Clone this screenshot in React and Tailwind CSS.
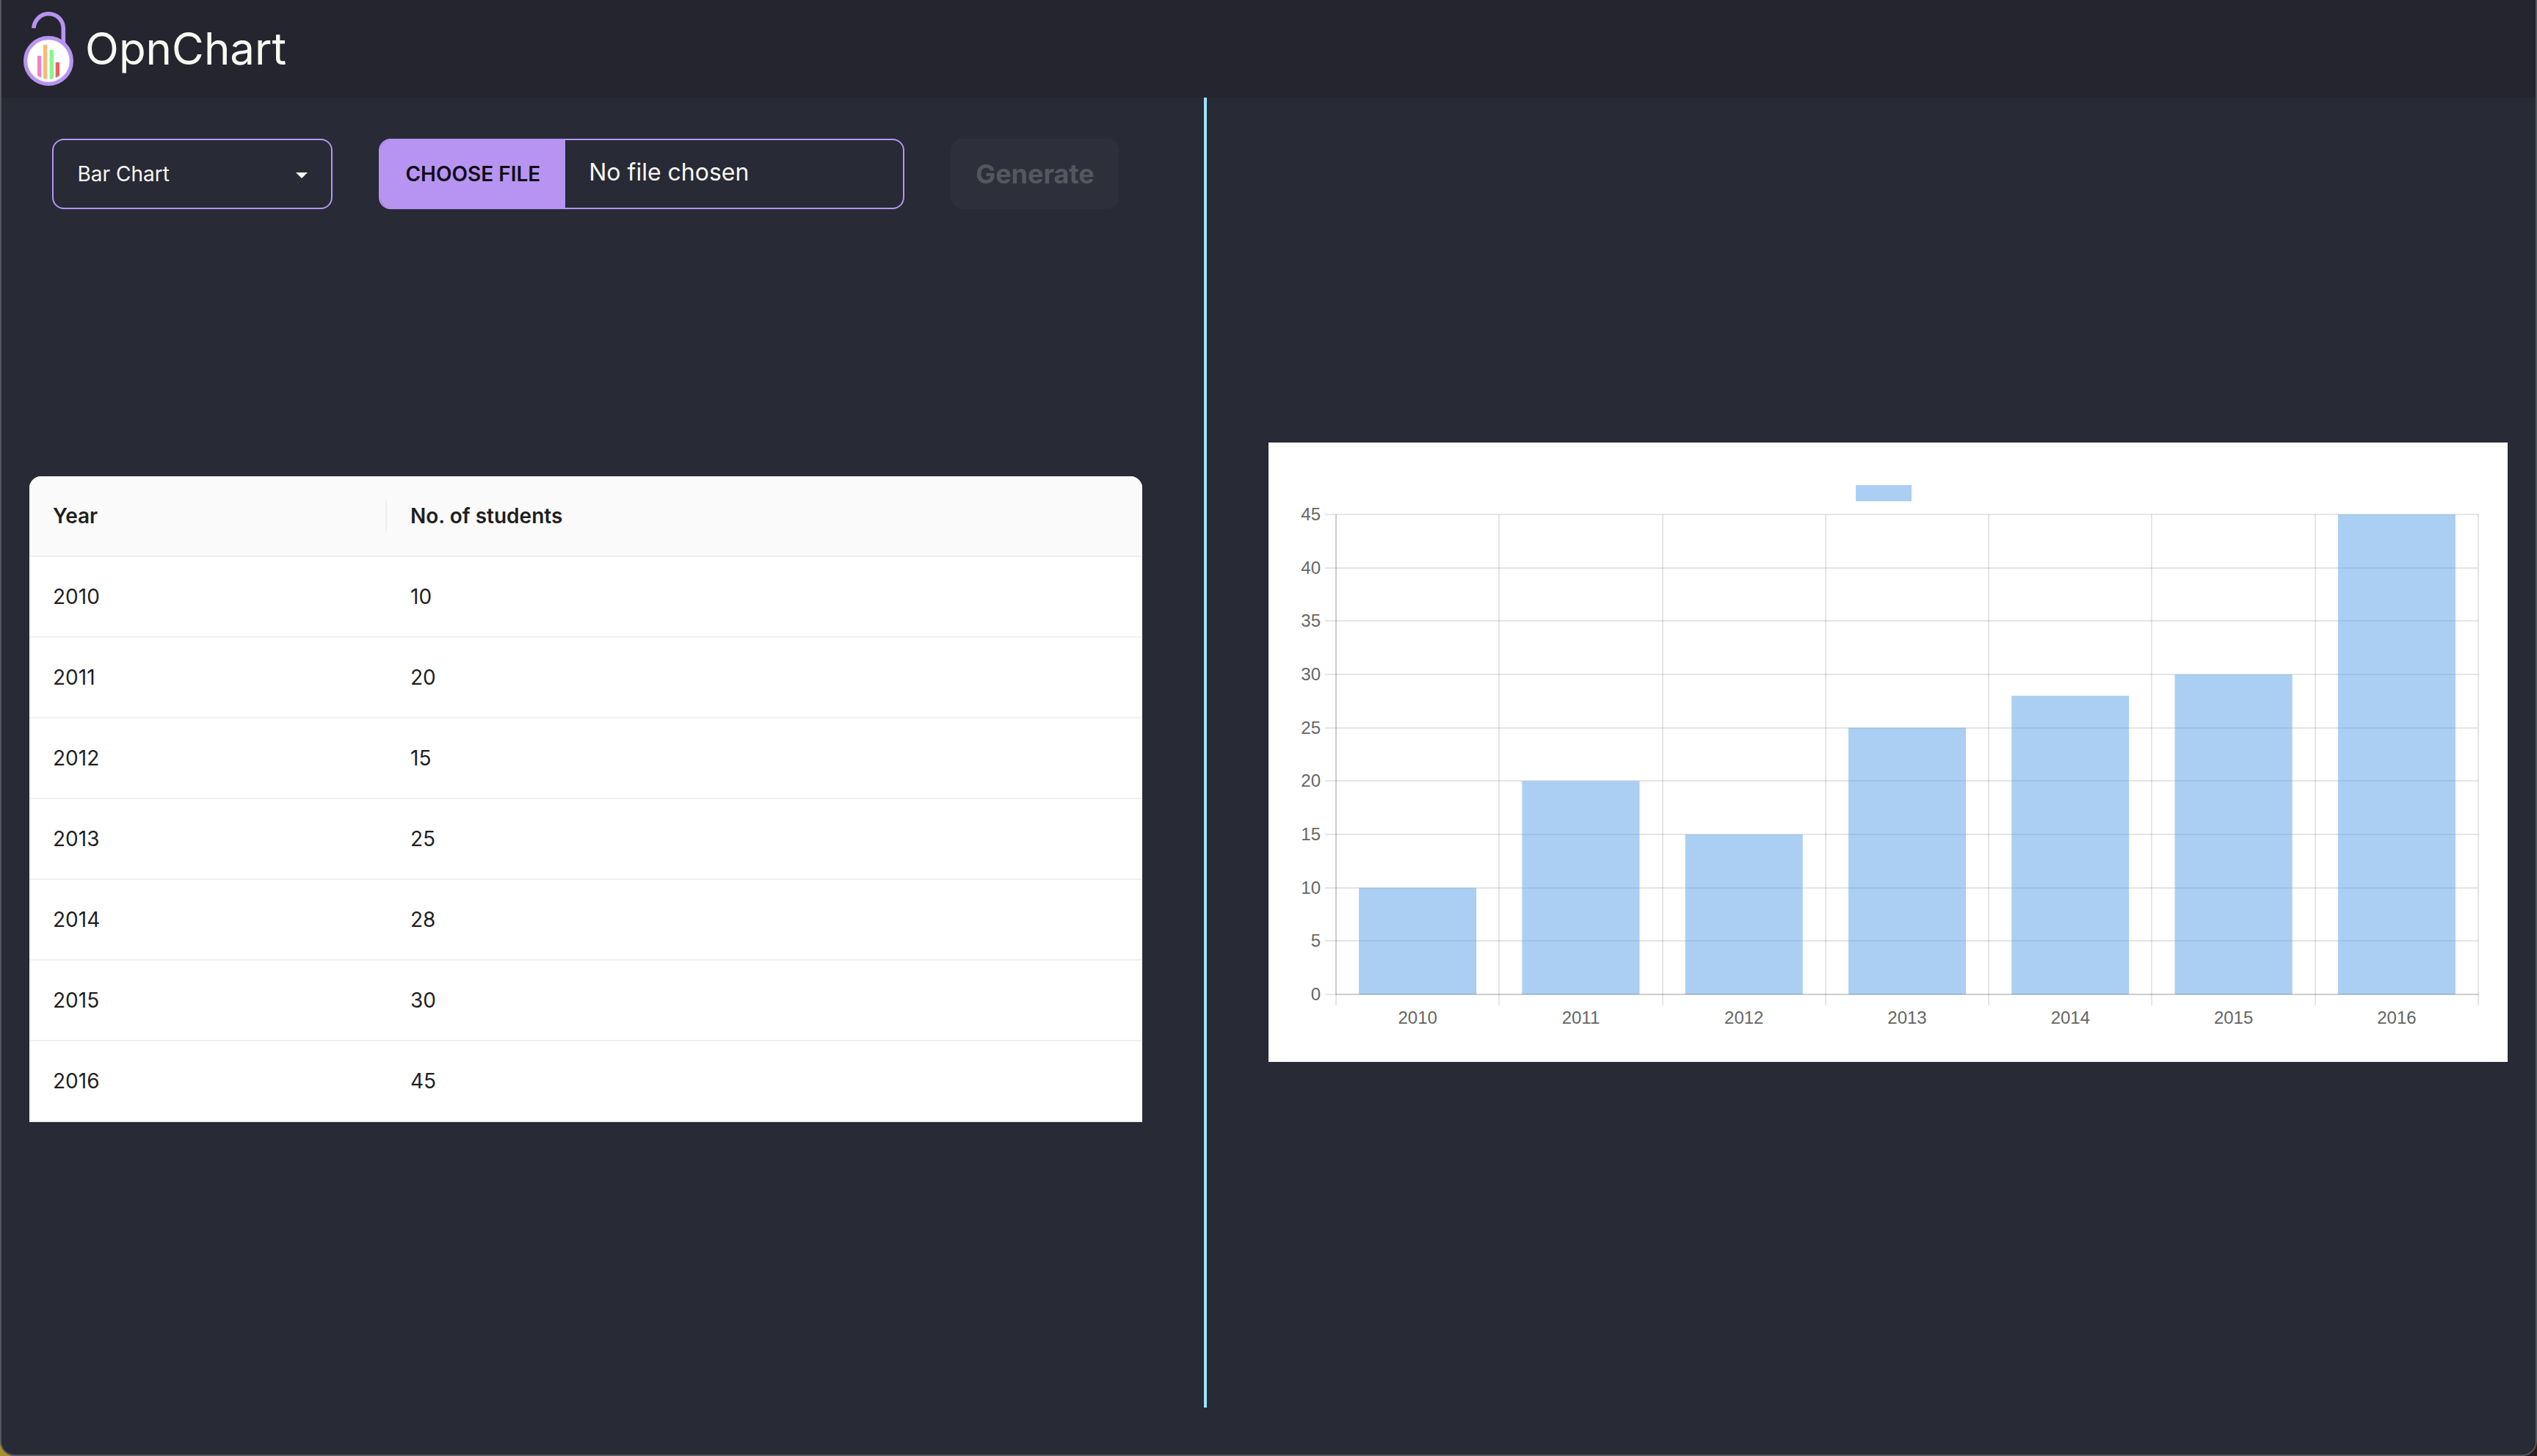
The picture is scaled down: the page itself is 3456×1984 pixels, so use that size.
import React from "react";

const rows = [
  [2010, 10],
  [2011, 20],
  [2012, 15],
  [2013, 25],
  [2014, 28],
  [2015, 30],
  [2016, 45],
];

function Logo() {
  return (
    <svg viewBox="32 16 68 101" className="h-[101px] w-[68px]" aria-hidden="true">
      <defs>
        <clipPath id="logo-disc">
          <circle cx="66" cy="83" r="25" />
        </clipPath>
      </defs>
      <path
        d="M45.9 38.4 C46.6 27.4 55.5 18.8 66 18.8 C77.5 18.8 86.3 27.5 86.3 39 V60"
        fill="none"
        stroke="#b794f2"
        strokeWidth="5.6"
      />
      <circle cx="66" cy="83" r="31.4" fill="#fff" stroke="#b794f2" strokeWidth="5.2" />
      <g clipPath="url(#logo-disc)">
        <rect x="51" y="76" width="5.3" height="40" fill="#ee82c4" />
        <rect x="56.3" y="76" width="0.7" height="40" fill="#f8d3ea" />
        <rect x="59" y="61" width="5.4" height="50" fill="#f5bb79" />
        <rect x="64.4" y="61" width="0.7" height="50" fill="#fbe6cd" />
        <rect x="67.6" y="68" width="5.4" height="50" fill="#86f68a" />
        <rect x="66.8" y="68" width="0.8" height="50" fill="#d3fbd4" />
        <rect x="76" y="85" width="5" height="40" fill="#eb605c" />
        <rect x="75.2" y="85" width="0.8" height="40" fill="#f8c9c8" />
      </g>
    </svg>
  );
}

function BarChart() {
  const left = 92;
  const right = 1648;
  const top = 98;
  const bottom = 752;
  const step = (right - left) / rows.length;
  const y = (v) => bottom - ((bottom - top) * v) / 45;
  const ticks = [0, 5, 10, 15, 20, 25, 30, 35, 40, 45];
  return (
    <svg
      viewBox="0 0 1688 844"
      className="block w-full bg-white font-['Liberation_Sans',Arial,sans-serif] text-[24px]"
      role="img"
      aria-label="Number of students by year"
    >
      <rect x="800" y="58" width="76" height="22" fill="#abcff3" />
      <g stroke="#000" strokeOpacity="0.1" strokeWidth="2">
        {ticks.map((t) => (
          <line key={t} x1="77" x2={right} y1={Math.round(y(t))} y2={Math.round(y(t))} />
        ))}
        {[0, 1, 2, 3, 4, 5, 6, 7].map((i) => (
          <line
            key={i}
            x1={Math.round(left + i * step)}
            x2={Math.round(left + i * step)}
            y1={top}
            y2="767"
          />
        ))}
        <line x1={left} x2={left} y1={top} y2={bottom} />
      </g>
      <g fill="#579fe7" fillOpacity="0.5">
        {rows.map(([year, n], i) => (
          <rect
            key={year}
            x={left + step * (i + 0.14)}
            y={y(n)}
            width={step * 0.72}
            height={bottom - y(n)}
          />
        ))}
      </g>
      <line x1={left} x2={right} y1={bottom} y2={bottom} stroke="#000" strokeOpacity="0.1" strokeWidth="2" />
      <g fill="#666" textAnchor="end">
        {ticks.map((t) => (
          <text key={t} x="71" y={y(t) + 8}>
            {t}
          </text>
        ))}
      </g>
      <g fill="#666" textAnchor="middle">
        {rows.map(([year], i) => (
          <text key={year} x={left + step * (i + 0.5)} y="792">
            {year}
          </text>
        ))}
      </g>
    </svg>
  );
}

export default function App() {
  return (
    <div className="bg-linear-to-r from-[#a8912f] to-[#2a1c1c] font-[Inter,sans-serif]">
      <div className="flex min-h-screen flex-col overflow-hidden rounded-b-[20px] border-x-2 border-b-2 border-[#55565f] bg-[#282a36] pb-16 text-[#f8f8f2]">
        <header className="flex items-center gap-4 bg-[#25252f] px-[30px] py-4">
          <Logo />
          <h1 className="pb-0.5 text-[60px] leading-[72px]">OpnChart</h1>
        </header>

        <main className="grid flex-1 grid-cols-[37fr_96px_41fr]">
          <section className="flex flex-col px-[38px]">
            <form className="flex justify-center gap-[63px] pt-14">
              <div className="relative">
                <select
                  aria-label="Chart type"
                  className="h-24 w-[382px] appearance-none rounded-2xl border-2 border-[#b794f2] bg-[#282a36] px-8 text-[28px] leading-10"
                >
                  <option>Bar Chart</option>
                </select>
                <svg
                  viewBox="0 0 16 8"
                  className="pointer-events-none absolute top-[46px] right-[34px] h-2 w-4"
                  aria-hidden="true"
                >
                  <path d="M0 0H16L8 8Z" fill="#f8f8f2" />
                </svg>
              </div>
              <input
                type="file"
                aria-label="Data file"
                className="h-24 w-[716px] overflow-hidden rounded-2xl border-2 border-[#b794f2] text-[32px] leading-[88px] file:me-8 file:h-[92px] file:border-2 file:border-[#b794f2] file:bg-[#b794f2] file:px-8 file:align-top file:text-[28px] file:leading-[88px] file:font-semibold file:text-[#100c15] file:uppercase"
              />
              <button
                type="button"
                disabled
                className="h-24 w-[229px] rounded-2xl bg-[#2d2f3a] text-[36px] leading-10 font-bold text-[#55575f]"
              >
                Generate
              </button>
            </form>

            <div className="flex flex-1 flex-col justify-center pb-[25px]">
              <table className="w-full table-fixed border-separate border-spacing-0 overflow-hidden rounded-t-2xl bg-white text-left text-[28px] leading-[44px] text-[#1f1f1f]">
                <colgroup>
                  <col className="w-[487px]" />
                  <col />
                </colgroup>
                <thead className="bg-[#fafafa]">
                  <tr>
                    <th className="border-b-2 border-[#f0f0f0] py-8 pl-8 font-semibold">
                      <div className="border-r-2 border-[#f0f0f0]">Year</div>
                    </th>
                    <th className="border-b-2 border-[#f0f0f0] p-8 font-semibold">No. of students</th>
                  </tr>
                </thead>
                <tbody>
                  {rows.map(([year, n]) => (
                    <tr key={year}>
                      <td className="border-b-2 border-[#f0f0f0] p-8">{year}</td>
                      <td className="border-b-2 border-[#f0f0f0] p-8">{n}</td>
                    </tr>
                  ))}
                </tbody>
              </table>
            </div>
          </section>

          <div className="mx-auto w-1 bg-[#9be7fb]" />

          <section className="flex flex-col justify-center px-[38px] pb-px">
            <BarChart />
          </section>
        </main>
      </div>
    </div>
  );
}
